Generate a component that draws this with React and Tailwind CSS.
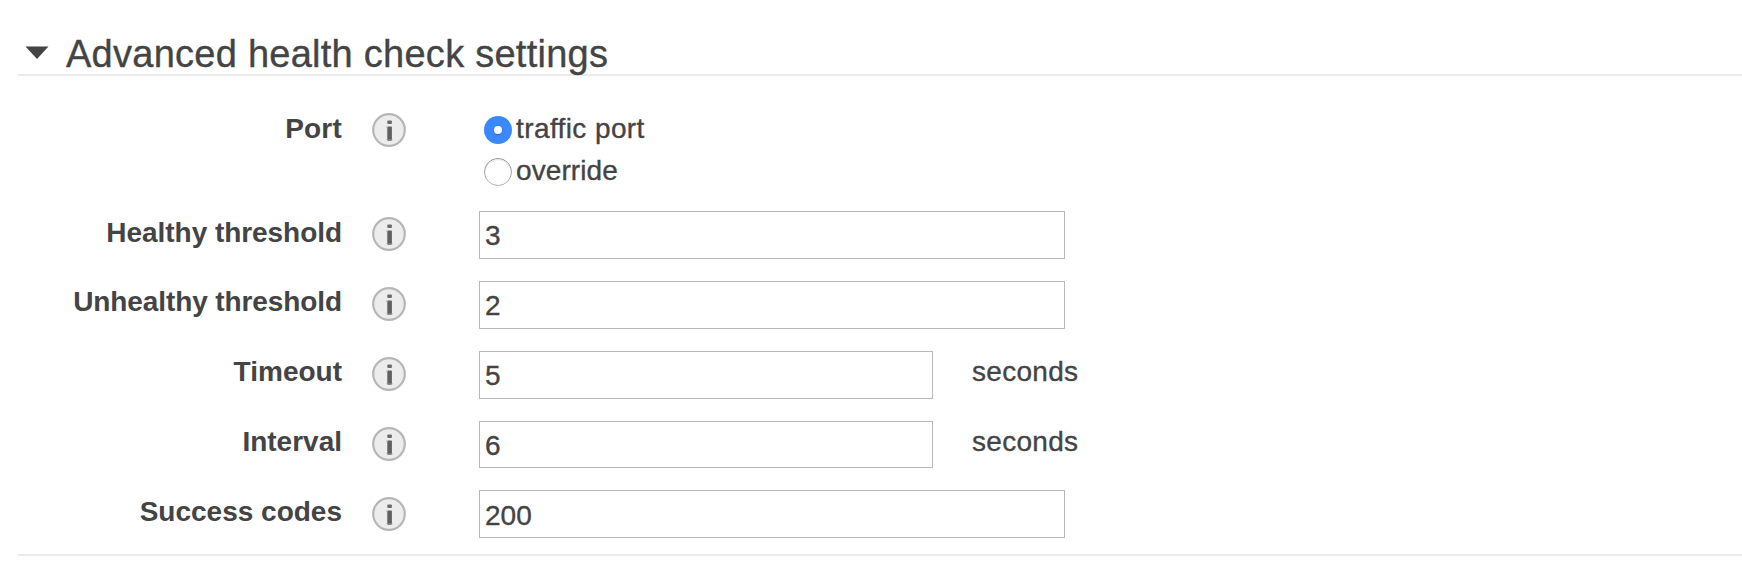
const rows = [
  { label: 'Healthy threshold', value: '3', row: 'h-[70px]', text: 'pt-1.5', icon: 'mt-1.5', spacing: 'tracking-[-0.05px]', input: 'h-12 w-[586px] pt-0.5' },
  { label: 'Unhealthy threshold', value: '2', row: 'h-[70px]', text: 'pt-[5px]', icon: 'mt-1.5', spacing: 'tracking-[-0.1px]', input: 'h-12 w-[586px] pt-px' },
  { label: 'Timeout', value: '5', unit: 'seconds', row: 'h-[70px]', text: 'pt-[5px]', icon: 'mt-1.5', spacing: 'tracking-normal', input: 'h-12 w-[454px] pt-px' },
  { label: 'Interval', value: '6', unit: 'seconds', row: 'h-[69px]', text: 'pt-[5px]', icon: 'mt-1.5', spacing: 'tracking-normal', input: 'h-[47px] w-[454px] pt-0.5' },
  { label: 'Success codes', value: '200', row: 'h-[64px]', text: 'pt-1.5', icon: 'mt-[7px]', spacing: 'tracking-normal', input: 'h-12 w-[586px] pt-[3px]' },
];

function InfoIcon({ className }) {
  return (
    <svg viewBox="0 0 34 34" className={`ml-[30px] h-[34px] w-[34px] shrink-0 ${className}`}>
      <circle cx="17" cy="17" r="15.8" fill="#ececec" stroke="#b6b6b6" strokeWidth="2.2" />
      <rect x="15.3" y="7.6" width="4.6" height="3.4" rx="1" fill="#6a6a6a" />
      <rect x="15.3" y="13.4" width="4.6" height="14.4" rx="0.8" fill="#606060" />
      <rect x="14.2" y="13.4" width="1.3" height="1.8" fill="#b8b8b8" />
      <rect x="14.2" y="26" width="6.8" height="1.4" fill="#a0a0a0" opacity="0.4" />
    </svg>
  );
}

function Label({ children, className }) {
  return <div className={`w-[324px] shrink-0 text-right font-bold ${className}`}>{children}</div>;
}

function Radio({ checked, label, spacing }) {
  return (
    <label className="flex h-[42px] items-start">
      <svg viewBox="0 0 28 28" className="mt-[3px] h-7 w-7 shrink-0">
        <defs>
          <linearGradient id="ring" x1="0" y1="0" x2="0" y2="1">
            <stop offset="0" stopColor="#8e8e8e" />
            <stop offset="1" stopColor="#b4b4b4" />
          </linearGradient>
        </defs>
        {checked ? (
          <>
            <circle cx="14" cy="14" r="14" fill="#3b88fd" />
            <circle cx="14" cy="15" r="4.2" fill="#2c70dc" />
            <circle cx="14" cy="14" r="4" fill="#fff" />
          </>
        ) : (
          <>
            <circle cx="14" cy="14" r="13.5" fill="#fff" stroke="url(#ring)" />
            <path d="M2.2 10a12.5 12.5 0 0 1 23.6 0" fill="none" stroke="#e6e6e6" />
          </>
        )}
      </svg>
      <span className={`ml-1 [-webkit-text-stroke:0.35px_#444] ${spacing}`}>{label}</span>
    </label>
  );
}

export default function App() {
  return (
    <main className="h-[588px] overflow-hidden bg-white pl-[18px] font-['Liberation_Sans',Arial,sans-serif] text-[28px] leading-8 text-[#444]">
      <header className="flex h-[76px] items-start border-b-2 border-[#ebebeb]">
        <svg viewBox="0 0 24 14" className="mt-[46px] ml-[7px] h-3.5 w-6">
          <path d="M.5.5h23L12 13z" fill="#444" />
        </svg>
        <h1 className="mt-8 ml-[17px] text-[38px] leading-[44px] tracking-[0.26px] [-webkit-text-stroke:0.35px_#444]">
          Advanced health check settings
        </h1>
      </header>
      <section className="border-b-2 border-[#ebebeb] pt-[37px]">
        <div className="flex h-[98px] items-start">
          <Label className="tracking-[0.2px]">Port</Label>
          <InfoIcon className="" />
          <div className="ml-[78px]">
            <Radio checked label="traffic port" spacing="tracking-[0.4px]" />
            <Radio label="override" spacing="tracking-[0.1px]" />
          </div>
        </div>
        {rows.map((r) => (
          <div key={r.label} className={`flex items-start ${r.row}`}>
            <Label className={`${r.text} ${r.spacing}`}>{r.label}</Label>
            <InfoIcon className={r.icon} />
            <input
              aria-label={r.label}
              defaultValue={r.value}
              className={`ml-[73px] shrink-0 border border-[#b8b8b8] bg-white px-[5px] outline-none [-webkit-text-stroke:0.35px_#444] ${r.input}`}
            />
            {r.unit && (
              <span className={`ml-[39px] tracking-[0.3px] [-webkit-text-stroke:0.35px_#444] ${r.text}`}>{r.unit}</span>
            )}
          </div>
        ))}
      </section>
    </main>
  );
}
